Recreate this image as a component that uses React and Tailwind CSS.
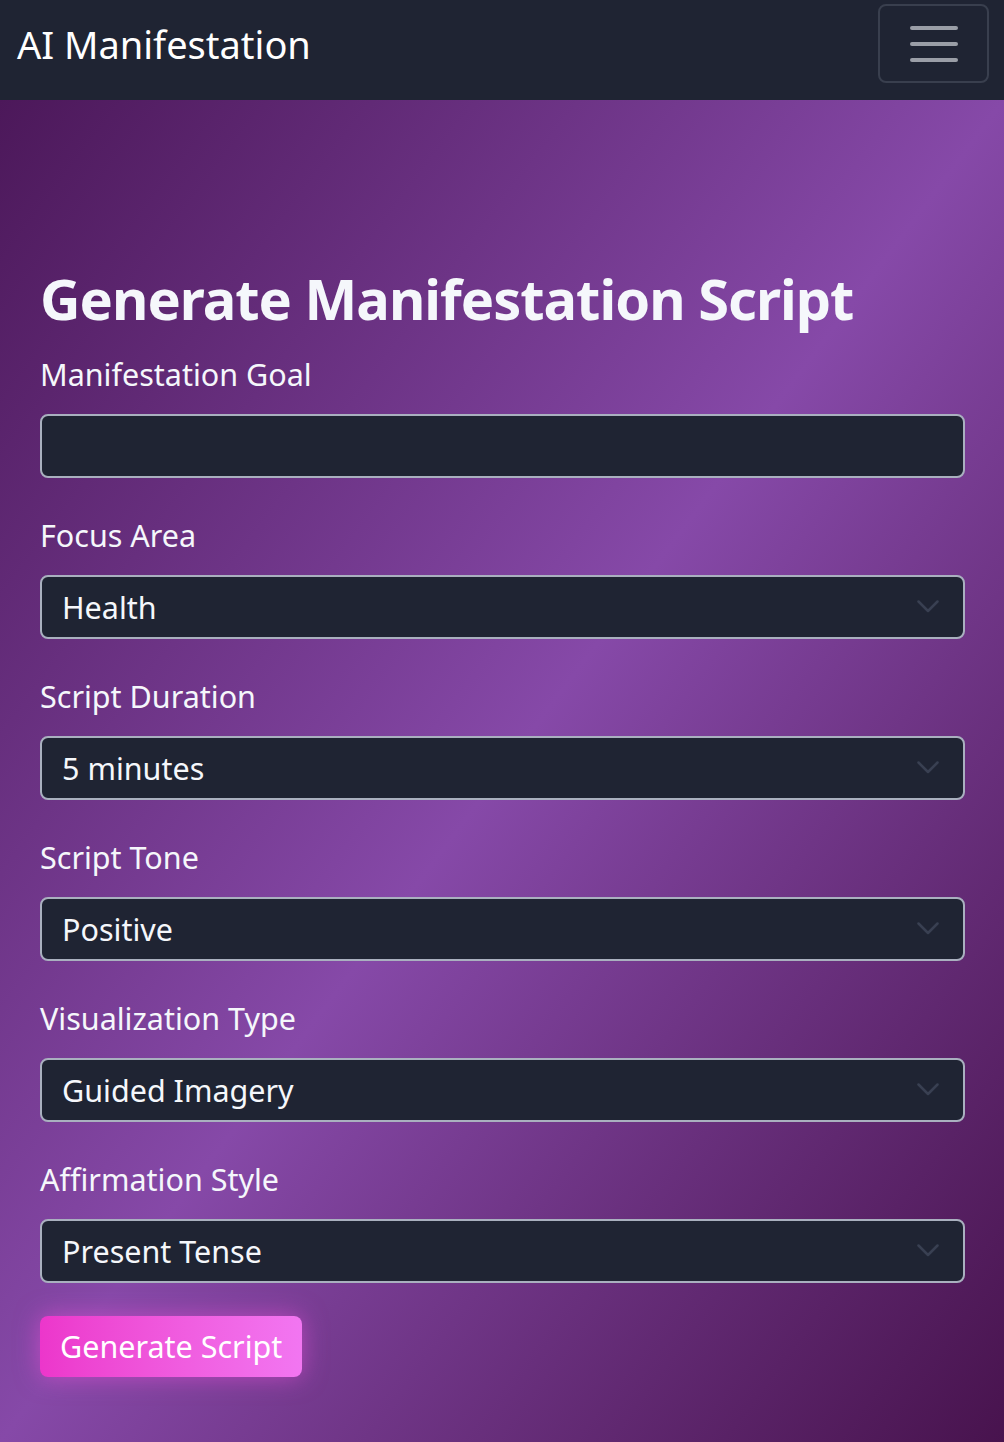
import React from 'react'

const fields = [
  { label: 'Focus Area', value: 'Health' },
  { label: 'Script Duration', value: '5 minutes' },
  { label: 'Script Tone', value: 'Positive' },
  { label: 'Visualization Type', value: 'Guided Imagery' },
  { label: 'Affirmation Style', value: 'Present Tense' },
]

const Chevron = () => (
  <svg width="22" height="14" viewBox="0 0 22 14" fill="none" className="shrink-0">
    <path d="M1.5 1.5 L11 11 L20.5 1.5" stroke="#394052" strokeWidth="2.5" strokeLinecap="round" strokeLinejoin="round" />
  </svg>
)

const App = () => {
  return (
    <div className="min-h-[1442px] flex flex-col text-white" style={{ fontFamily: '"Noto Sans", "Open Sans", sans-serif' }}>
      <nav className="h-[100px] bg-[#1f2433] flex items-start justify-between pl-[17px] pr-[15px] pt-[4px]">
        <div className="h-[80px] flex items-center text-[38px] leading-none">AI Manifestation</div>
        <button className="w-[111px] h-[79px] rounded-[8px] border-2 border-[#393f4e] flex flex-col items-center justify-center gap-[12px]">
          <span className="block w-[48px] h-[4px] rounded-full bg-[#9a9ea7]" />
          <span className="block w-[48px] h-[4px] rounded-full bg-[#9a9ea7]" />
          <span className="block w-[48px] h-[4px] rounded-full bg-[#9a9ea7]" />
        </button>
      </nav>

      <main className="flex-1 bg-linear-to-br from-[#4c185a] via-[#8649a8] to-[#48134e] pl-[40px] pr-[39px] pt-[163px] pb-[60px]">
        <h1 className="text-[56px] leading-[71px] font-bold tracking-[-1px] mb-[16px] text-[#f5f7fb]">Generate Manifestation Script</h1>

        <div className="mb-[33px]">
          <label className="block text-[30.5px] leading-[48px] mb-[16px] text-[#f5f7fb]">Manifestation Goal</label>
          <div className="h-[64px] rounded-[8px] border-2 border-[#a9b0bf] bg-[#1f2433]" />
        </div>

        {fields.map((f) => (
          <div key={f.label} className="mb-[33px]">
            <label className="block text-[30.5px] leading-[48px] mb-[16px] text-[#f5f7fb]">{f.label}</label>
            <div className="h-[64px] rounded-[8px] border-2 border-[#a9b0bf] bg-[#1f2433] flex items-center justify-between pl-[20px] pr-[24px]">
              <span className="text-[30.5px] leading-none text-[#f5f7fb]">{f.value}</span>
              <Chevron />
            </div>
          </div>
        ))}

        <button className="h-[61px] px-[20px] rounded-[8px] bg-linear-to-r from-[#ec36cb] to-[#f276f1] text-[30.5px] leading-none text-white shadow-[0_0_24px_rgba(240,80,220,0.55)]">
          Generate Script
        </button>
      </main>
    </div>
  )
}

export default App
